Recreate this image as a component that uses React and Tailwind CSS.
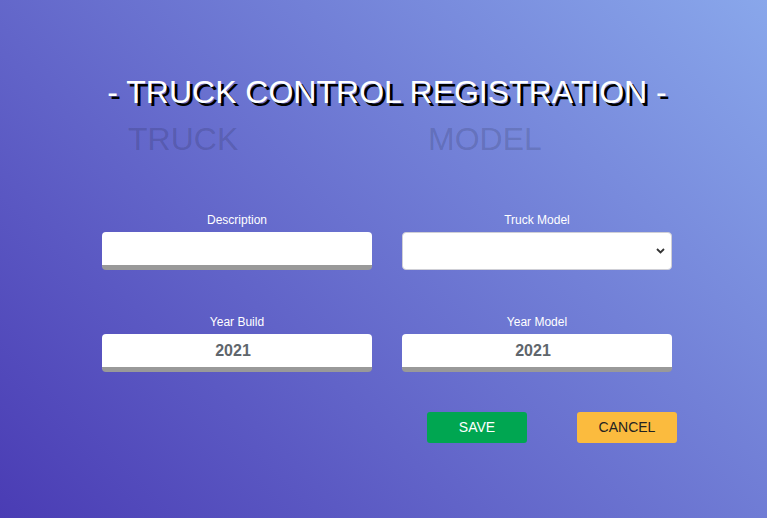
import React, { useState } from 'react';

const Field = ({ label, children }) => (
  <div className="flex flex-col items-center w-[270px]">
    <label className="text-[12px] leading-none text-white mb-[6px]">{label}</label>
    {children}
  </div>
);

const App = () => {
  const [form, setForm] = useState({ description: '', model: '', yearBuild: '2021', yearModel: '2021' });

  const inputClass =
    'w-full h-[38px] bg-white rounded-[4px] border-b-[5px] border-[#999999] text-center text-[16px] font-bold text-[#5f666c] outline-none';

  return (
    <div
      className="w-full min-h-[518px] bg-[linear-gradient(45deg,#4a3cb4,#89a7eb)] pt-[76px]"
      style={{ fontFamily: '"Liberation Sans", Arial, Helvetica, sans-serif' }}
    >
      <div className="w-[570px] ml-[102px]">
        <h1 className="text-center text-[32px] leading-none text-white [text-shadow:3px_3px_0_#000]">
          - TRUCK CONTROL REGISTRATION -
        </h1>
        <div className="flex mt-[15px] pl-[26px] gap-[190px]">
          <div className="shrink-0 w-[110px] text-[32px] leading-none text-black/15">TRUCK</div>
          <div className="shrink-0 text-[32px] leading-none text-black/15">MODEL</div>
        </div>

        <form className="mt-[59px]" onSubmit={(e) => e.preventDefault()}>
          <div className="grid grid-cols-[270px_270px] gap-x-[30px] gap-y-[46px]">
            <Field label="Description">
              <input
                value={form.description}
                onChange={(e) => setForm({ ...form, description: e.target.value })}
                className={inputClass}
              />
            </Field>
            <Field label="Truck Model">
              <div className="relative w-full">
                <select
                  value={form.model}
                  onChange={(e) => setForm({ ...form, model: e.target.value })}
                  className="w-full h-[38px] bg-white rounded-[4px] border border-[#cfcfd6] appearance-none outline-none"
                >
                  <option value=""></option>
                </select>
                <svg
                  className="absolute right-[7px] top-[16px] pointer-events-none"
                  width="9"
                  height="6"
                  viewBox="0 0 9 6"
                >
                  <path d="M1 1l3.5 3.5L8 1" fill="none" stroke="#333" strokeWidth="1.8" />
                </svg>
              </div>
            </Field>
            <Field label="Year Build">
              <input
                value={form.yearBuild}
                onChange={(e) => setForm({ ...form, yearBuild: e.target.value })}
                className={`${inputClass} pr-2`}
              />
            </Field>
            <Field label="Year Model">
              <input
                value={form.yearModel}
                onChange={(e) => setForm({ ...form, yearModel: e.target.value })}
                className={`${inputClass} pr-2`}
              />
            </Field>
          </div>

          <div className="flex mt-[40px] ml-[325px] gap-[50px]">
            <button
              type="submit"
              className="shrink-0 w-[100px] h-[31px] rounded-[3px] bg-[#00a651] text-white text-[14px]"
            >
              SAVE
            </button>
            <button
              type="button"
              className="shrink-0 w-[100px] h-[31px] rounded-[3px] bg-[#fbbb3e] text-[#222] text-[14px]"
            >
              CANCEL
            </button>
          </div>
        </form>
      </div>
    </div>
  );
};

export default App;
